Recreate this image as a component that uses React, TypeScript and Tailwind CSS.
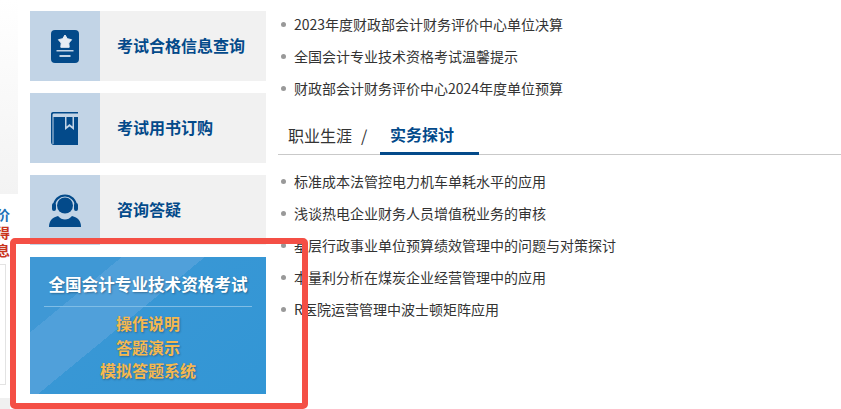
// App.tsx
const cjk = "font-['Microsoft_YaHei','Noto_Sans_CJK_SC','Noto_Sans',sans-serif]"

const notices = [
  '2023年度财政部会计财务评价中心单位决算',
  '全国会计专业技术资格考试温馨提示',
  '财政部会计财务评价中心2024年度单位预算',
]

const articles = [
  '标准成本法管控电力机车单耗水平的应用',
  '浅谈热电企业财务人员增值税业务的审核',
  '基层行政事业单位预算绩效管理中的问题与对策探讨',
  '本量利分析在煤炭企业经营管理中的应用',
  'R医院运营管理中波士顿矩阵应用',
]

function BadgeIcon() {
  return (
    <svg width="28" height="33" viewBox="0 0 28 33">
      <rect width="28" height="33" rx="4" fill="#034a8a" />
      <path
        d="M14 5l2.300 3.700 4.300 1-2.800 3.300.4 4.300H9.800l.4-4.300-2.800-3.300 4.300-1z"
        fill="#e6edf5"
        stroke="#e6edf5"
        strokeLinejoin="round"
      />
      <rect x="5.500" y="20" width="17" height="1.500" fill="#c3d4e6" />
      <rect x="8.500" y="25" width="11" height="2" fill="#c3d4e6" />
    </svg>
  )
}

function BookIcon() {
  return (
    <svg width="28" height="33" viewBox="0 0 28 33">
      <path d="M2 0h25v1.500H3C2 1.500 1.500 2 1.500 3v2h25.500v28H3c-1.700 0-3-1.300-3-3V2C0 .9.900 0 2 0z" fill="#034a8a" />
      <rect x="1.500" y="5" width="1" height="27" fill="#c3d4e6" />
      <path d="M14 5h9v13l-4.500-3.500L14 18z" fill="#c3d4e6" />
      <path d="M15.500 5h6v9.500l-3-2.500-3 2.500z" fill="#034a8a" />
    </svg>
  )
}

function HeadsetIcon() {
  return (
    <svg width="32" height="33" viewBox="0 0 32 33">
      <circle cx="16" cy="11.500" r="8" fill="#034a8a" />
      <path d="M5 13C5 6 10 1.500 16 1.500S27 6 27 13" fill="none" stroke="#034a8a" strokeWidth="2.200" />
      <rect x="3" y="9" width="4" height="8" rx="2" fill="#034a8a" />
      <rect x="25" y="9" width="4" height="8" rx="2" fill="#034a8a" />
      <path d="M0 33c0-6 3-9.500 9-11 2 2.500 4.500 3.500 7 3.500s5-1 7-3.500c6 1.500 9 5 9 11z" fill="#034a8a" />
    </svg>
  )
}

function ServiceRow({ icon, label }: { icon: React.ReactNode; label: string }) {
  return (
    <div className="flex h-[70px] w-[236px] bg-[#f1f1f1]">
      <div className="flex w-[70px] items-center justify-center bg-[#c2d4e6]">{icon}</div>
      <div className="flex flex-1 items-center pb-[2px] pl-[17px] text-[16px] font-bold text-[#034a8a]">{label}</div>
    </div>
  )
}

function ListRows({ rows }: { rows: string[] }) {
  return (
    <ul className="flex flex-col">
      {rows.map((row) => (
        <li key={row} className="flex h-[32px] items-center pl-[3px] text-[14px] text-[#333333]">
          <span className="mr-[8px] h-[5px] w-[5px] rounded-full bg-[#999999]" />
          {row}
        </li>
      ))}
    </ul>
  )
}

export default function App() {
  return (
    <div className={`relative flex h-[409px] w-[841px] overflow-hidden bg-white ${cjk}`}>
      {/* cut off left column */}
      <div className="flex w-[30px] shrink-0 flex-col">
        <div className="h-[194px] w-[18px] bg-gradient-to-b from-white to-[#f3f3f3]" />
        <div className="mt-[11px] flex w-[10px] flex-col items-end text-[14px] font-bold leading-[18px]">
          <span className="whitespace-nowrap text-[#1a6fb5]">价</span>
          <span className="whitespace-nowrap text-[#c9341c]">得</span>
          <span className="whitespace-nowrap text-[#c9341c]">息</span>
        </div>
        <div className="mt-[5px] h-[121px] w-[6px] border border-l-0 border-[#e3e3e3]" />
        <div className="mt-[13px] h-[11px] w-[10px] bg-[#f0f0f0]" />
      </div>

      <div className="flex w-[236px] shrink-0 flex-col gap-[12px] pt-[11px]">
        <ServiceRow icon={<BadgeIcon />} label="考试合格信息查询" />
        <ServiceRow icon={<BookIcon />} label="考试用书订购" />
        <ServiceRow icon={<HeadsetIcon />} label="咨询答疑" />
        <div className="flex h-[137px] flex-col items-center bg-[linear-gradient(140.6deg,#3f98d5_0%,#3f98d5_22.8%,#50a0da_22.8%,#50a0da_43.4%,#3897d5_43.4%,#3296d5_100%)] pt-[14px]">
          <div className="text-[16.6px] font-bold leading-[26px] text-white [text-shadow:1px_1px_2px_rgba(0,0,0,0.3)]">
            全国会计专业技术资格考试
          </div>
          <div className="mt-[9px] h-px w-[208px] bg-[#7fbde6]" />
          <div className="mt-[5px] flex flex-col items-center text-[16px] font-bold leading-[23.500px] text-[#f6b84f] [text-shadow:1px_1px_2px_rgba(0,0,0,0.3)]">
            <span>操作说明</span>
            <span>答题演示</span>
            <span>模拟答题系统</span>
          </div>
        </div>
      </div>

      <div className="ml-[12px] flex flex-1 flex-col pt-[8px]">
        <ListRows rows={notices} />
        <div className="mt-[12px] flex h-[39px] items-stretch border-b border-[#c9c9c9] text-[16px]">
          <div className="flex w-[102px] items-center pl-[10px] text-[#333333]">
            职业生涯<span className="ml-[9px]">/</span>
          </div>
          <div className="-mb-px flex w-[99px] items-center border-b-[3px] border-[#034a8a] pl-[10px] font-bold text-[#034a8a]">
            实务探讨
          </div>
        </div>
        <div className="mt-[10px]">
          <ListRows rows={articles} />
        </div>
      </div>

      {/* hand-drawn highlight on top of the screenshot */}
      <div className="absolute left-[10px] top-[238px] h-[171px] w-[298px] rounded-[5px] border-[6px] border-[#f44f45]" />
    </div>
  )
}
